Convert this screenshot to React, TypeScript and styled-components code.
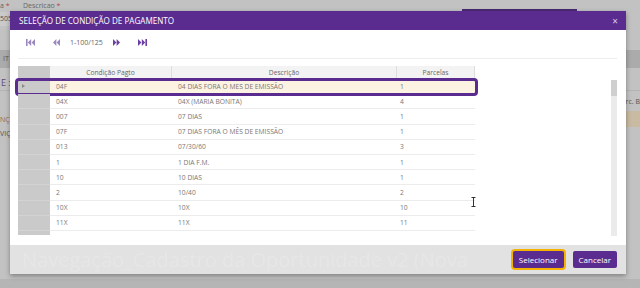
import styled, { createGlobalStyle, css } from 'styled-components'

const PURPLE = '#5b2c8f'

const GlobalStyle = createGlobalStyle`
  html, body {
    margin: 0;
    padding: 0;
  }
  body {
    width: 640px;
    height: 288px;
    overflow: hidden;
    font-family: "Open Sans", "Liberation Sans", sans-serif;
  }
`

type Row = { code: string; desc: string; parcelas: string }

const rows: Row[] = [
  { code: '04F', desc: '04 DIAS FORA O MES DE EMISSÃO', parcelas: '1' },
  { code: '04X', desc: '04X (MARIA BONITA)', parcelas: '4' },
  { code: '007', desc: '07 DIAS', parcelas: '1' },
  { code: '07F', desc: '07 DIAS FORA O MÊS DE EMISSÃO', parcelas: '1' },
  { code: '013', desc: '07/30/60', parcelas: '3' },
  { code: '1', desc: '1 DIA F.M.', parcelas: '1' },
  { code: '10', desc: '10 DIAS', parcelas: '1' },
  { code: '2', desc: '10/40', parcelas: '2' },
  { code: '10X', desc: '10X', parcelas: '10' },
  { code: '11X', desc: '11X', parcelas: '11' },
]

export default function App() {
  return (
    <>
      <GlobalStyle />
      <Page>
        <Backdrop>
          <LabelRow>
            <BgLabel $w={23}>
              a <Req>*</Req>
            </BgLabel>
            <BgLabel>
              Descricao <Req>*</Req>
            </BgLabel>
            <Grow />
            <TabLine />
          </LabelRow>
          <InputRow>
            <BgInput>505</BgInput>
          </InputRow>
          <Gap $h={23} />
          <Band>IT</Band>
          <Gap $h={7} />
          <SectionTitle>E :</SectionTitle>
          <EdgeRow>
            <span />
            <span>rc. B</span>
          </EdgeRow>
          <EdgeRow $h={16}>
            <OrangeText>NÇ</OrangeText>
            <TanSwatch />
          </EdgeRow>
          <EdgeRow $h={12}>
            <span>VIÇ</span>
            <span />
          </EdgeRow>
          <Grow />
          <BottomBar />
        </Backdrop>

        <Modal>
          <Header>
            <Title>SELEÇÃO DE CONDIÇÃO DE PAGAMENTO</Title>
            <Close>×</Close>
          </Header>
          <Body>
            <Toolbar>
              <NavIcon $ml={8} $muted width="9" height="7" viewBox="0 0 9 7">
                <rect x="0" y="0" width="1.6" height="7" />
                <polygon points="5.2,0 1.8,3.5 5.2,7" />
                <polygon points="9,0 5.6,3.5 9,7" />
              </NavIcon>
              <NavIcon $ml={18} $muted width="7" height="7" viewBox="0 0 7 7">
                <polygon points="3.4,0 0,3.5 3.4,7" />
                <polygon points="7,0 3.6,3.5 7,7" />
              </NavIcon>
              <PageInfo>1-100/125</PageInfo>
              <NavIcon $ml={10} width="7" height="7" viewBox="0 0 7 7">
                <polygon points="0,0 3.4,3.5 0,7" />
                <polygon points="3.6,0 7,3.5 3.6,7" />
              </NavIcon>
              <NavIcon $ml={18} width="9" height="7" viewBox="0 0 9 7">
                <polygon points="0,0 3.4,3.5 0,7" />
                <polygon points="3.8,0 7.2,3.5 3.8,7" />
                <rect x="7.4" y="0" width="1.6" height="7" />
              </NavIcon>
            </Toolbar>

            <GridArea>
              <Table>
                <HeadRow>
                  <RowHeadCell />
                  <HeadCell>Condição Pagto</HeadCell>
                  <HeadCell>Descrição</HeadCell>
                  <HeadCell>Parcelas</HeadCell>
                </HeadRow>
                {rows.map((r, i) => (
                  <DataRow key={r.code} $selected={i === 0}>
                    <RowHeadCell $line>{i === 0 && <RowArrow />}</RowHeadCell>
                    <Cell $pl={6}>{r.code}</Cell>
                    <Cell $pl={6}>{r.desc}</Cell>
                    <Cell $pl={3}>{r.parcelas}</Cell>
                  </DataRow>
                ))}
                <TailRow>
                  <RowHeadCell />
                </TailRow>
              </Table>
              <Grow />
              <ScrollTrack>
                <ScrollThumb />
              </ScrollTrack>
            </GridArea>
          </Body>
          <Footer>
            <Watermark>Navegação_Cadastro da Oportunidade v2 (Nova</Watermark>
            <Button $focused>Selecionar</Button>
            <Button>Cancelar</Button>
          </Footer>
        </Modal>

        <Cursor width="5" height="10" viewBox="0 0 5 10">
          <path d="M0.5 0.5 H4.5 M2.5 0.5 V9.5 M0.5 9.5 H4.5" stroke="#333" strokeWidth="1" fill="none" />
        </Cursor>
      </Page>
    </>
  )
}

const Page = styled.div`
  position: relative;
  width: 640px;
  height: 288px;
  overflow: hidden;
  background: #c2c2c2;
`

/* ---------- dimmed page behind the dialog ---------- */

const Backdrop = styled.div`
  position: absolute;
  inset: 0;
  display: flex;
  flex-direction: column;
  font-size: 7px;
  color: #666;
`

const LabelRow = styled.div`
  height: 11px;
  display: flex;
  align-items: center;
`

const BgLabel = styled.span<{ $w?: number }>`
  ${(p) => p.$w && `width: ${p.$w}px;`}
  white-space: nowrap;
`

const Req = styled.span`
  color: #b04848;
`

const Grow = styled.div`
  flex: 1;
`

const TabLine = styled.div`
  align-self: flex-end;
  width: 115px;
  height: 2px;
  margin-right: 63px;
  background: #4a2a72;
`

const InputRow = styled.div`
  height: 16px;
  display: flex;
  align-items: center;
`

const BgInput = styled.div`
  width: 60px;
  height: 14px;
  line-height: 14px;
  background: #cacaca;
  color: #555;
`

const Gap = styled.div<{ $h: number }>`
  height: ${(p) => p.$h}px;
  flex-shrink: 0;
`

const Band = styled.div`
  height: 18px;
  line-height: 18px;
  padding-left: 3px;
  background: #ababab;
  color: #555;
`

const SectionTitle = styled.div`
  height: 15px;
  line-height: 15px;
  padding-left: 1px;
  font-size: 9px;
  color: #5e4a7a;
  border-bottom: 1px solid #b4b4b4;
`

const EdgeRow = styled.div<{ $h?: number }>`
  height: ${(p) => p.$h ?? 20}px;
  display: flex;
  align-items: center;
  justify-content: space-between;
  color: #555;
`

const OrangeText = styled.span`
  color: #9a6a3a;
`

const TanSwatch = styled.div`
  width: 14px;
  height: 100%;
  background: #c9baa2;
`

const BottomBar = styled.div`
  height: 9px;
  background: #b5b5b5;
`

/* ---------- dialog ---------- */

const Modal = styled.div`
  position: absolute;
  left: 10px;
  top: 11px;
  width: 616px;
  height: 263px;
  display: flex;
  flex-direction: column;
  background: #fff;
  box-shadow: 0 2px 5px rgba(0, 0, 0, 0.35);
  z-index: 2;
`

const Header = styled.div`
  height: 19px;
  flex-shrink: 0;
  display: flex;
  align-items: center;
  justify-content: space-between;
  padding: 0 8px 0 9px;
  background: ${PURPLE};
  color: #fff;
`

const Title = styled.div`
  font-size: 8.1px;
`

const Close = styled.div`
  font-size: 10px;
  line-height: 10px;
  color: #dccbef;
`

const Body = styled.div`
  flex: 1;
  display: flex;
  flex-direction: column;
  padding: 0 9px 0 8px;
`

const Toolbar = styled.div`
  height: 29px;
  display: flex;
  align-items: center;
  padding-bottom: 3px;
  box-sizing: border-box;
  border-bottom: 1px solid #ededed;
`

const NavIcon = styled.svg<{ $ml: number; $muted?: boolean }>`
  margin-left: ${(p) => p.$ml}px;
  fill: ${(p) => (p.$muted ? '#9b88c1' : '#6b3fa3')};
  flex-shrink: 0;
`

const PageInfo = styled.span`
  margin-left: 10px;
  font-size: 7px;
  color: #666;
`

const GridArea = styled.div`
  display: flex;
  margin-top: 7px;
`

const Table = styled.div`
  width: 457px;
  display: flex;
  flex-direction: column;
  font-size: 6.7px;
  color: #777;
`

const columns = css`
  display: grid;
  grid-template-columns: 32px 122px 225px 78px;
`

const HeadRow = styled.div`
  ${columns}
  height: 13px;
  background: #f3f3f3;
`

const HeadCell = styled.div`
  display: flex;
  align-items: center;
  justify-content: center;
  border-right: 1px solid #dedede;
  border-bottom: 1px solid #e4e4e4;
  color: #666;
`

const RowHeadCell = styled.div<{ $line?: boolean }>`
  display: flex;
  align-items: center;
  background: #cacaca;
  ${(p) => p.$line && 'border-bottom: 1px solid #d3d3d3;'}
`

const RowArrow = styled.span`
  margin-left: 4px;
  border-left: 3px solid #8a8a8a;
  border-top: 2px solid transparent;
  border-bottom: 2px solid transparent;
`

const DataRow = styled.div<{ $selected?: boolean }>`
  ${columns}
  position: relative;
  height: 15.2px;
  box-sizing: border-box;
  ${(p) =>
    p.$selected &&
    css`
      & > div:not(:first-child) {
        background: #fdf3e3;
      }
      &::after {
        content: '';
        position: absolute;
        top: -1px;
        bottom: -2px;
        left: -3px;
        right: -3px;
        border: 3px solid ${PURPLE};
        border-radius: 4px;
      }
    `}
`

const Cell = styled.div<{ $pl: number }>`
  display: flex;
  align-items: center;
  padding-left: ${(p) => p.$pl}px;
  border-bottom: 1px solid #ececec;
  white-space: nowrap;
`

const TailRow = styled.div`
  ${columns}
  height: 4px;
`

const ScrollTrack = styled.div`
  width: 6px;
  height: 156px;
  margin-top: 14px;
  background: #ebebeb;
`

const ScrollThumb = styled.div`
  height: 16px;
  background: #cfcfcf;
`

const Footer = styled.div`
  height: 29px;
  flex-shrink: 0;
  display: flex;
  align-items: center;
  gap: 9px;
  padding: 0 9px 0 12px;
  background: #e2e2e2;
  overflow: hidden;
`

const Watermark = styled.div`
  flex: 1;
  min-width: 0;
  overflow: hidden;
  font-size: 20px;
  line-height: 29px;
  white-space: nowrap;
  color: rgba(255, 255, 255, 0.18);
`

const Button = styled.div<{ $focused?: boolean }>`
  flex-shrink: 0;
  height: 17px;
  line-height: 17px;
  padding: 0 6px;
  border-radius: 2px;
  background: ${PURPLE};
  color: #fff;
  font-size: 8px;
  ${(p) => p.$focused && 'box-shadow: 0 0 0 2px #f5b300;'}
`

const Cursor = styled.svg`
  position: absolute;
  left: 471px;
  top: 197px;
  z-index: 4;
`
